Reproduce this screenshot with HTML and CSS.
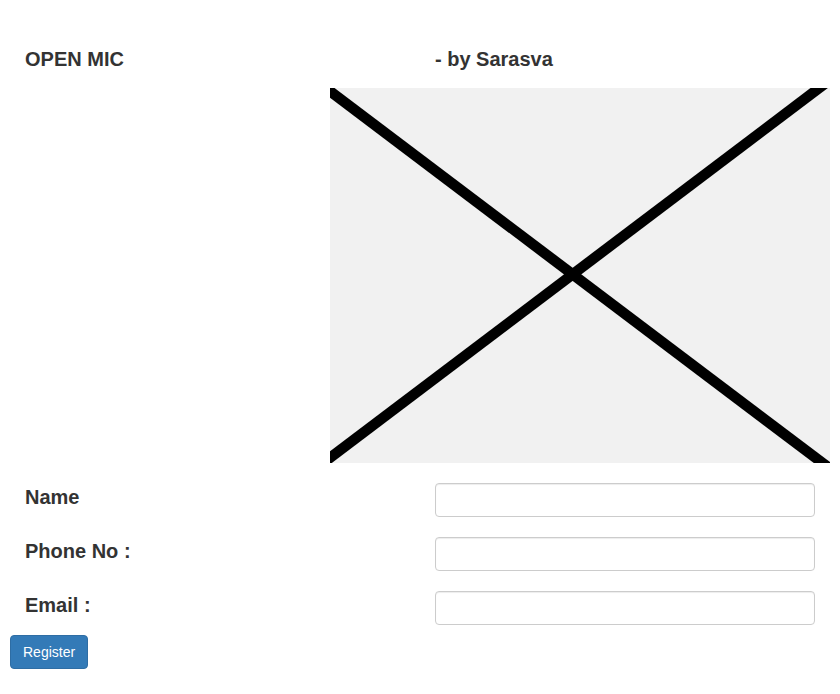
FILE: index.html
```html
<!DOCTYPE html>
<html lang="en">
<head>
<meta charset="utf-8">
<title>Open Mic</title>
<link rel="stylesheet" href="styles.css">
</head>
<body>
<div class="page">
  <div class="header">
    <h4 class="title">OPEN MIC</h4>
    <h4 class="title">- by Sarasva</h4>
  </div>
  <div class="banner">
    <svg class="banner-svg" width="500" height="375" viewBox="0 0 500 375">
      <rect x="0" y="0" width="500" height="375" fill="#f1f1f1"/>
      <line x1="-20" y1="-11.95" x2="520" y2="395.75" stroke="#000" stroke-width="10.5"/>
      <line x1="-20" y1="384.9" x2="520" y2="-23.3" stroke="#000" stroke-width="10.5"/>
    </svg>
  </div>
  <form class="form">
    <div class="row">
      <label class="label" for="name">Name</label>
      <div class="field"><input id="name" class="input" type="text"></div>
    </div>
    <div class="row">
      <label class="label" for="phone">Phone No :</label>
      <div class="field"><input id="phone" class="input" type="text"></div>
    </div>
    <div class="row">
      <label class="label" for="email">Email :</label>
      <div class="field"><input id="email" class="input" type="email"></div>
    </div>
    <button type="button" class="btn">Register</button>
  </form>
</div>
</body>
</html>
```
FILE: styles.css
```css
html, body {
  margin: 0;
  padding: 0;
  background: #fff;
}
body {
  font-family: "Liberation Sans", Arial, Helvetica, sans-serif;
  font-size: 14px;
  line-height: 1.42857;
  color: #333;
}
.page {
  padding: 0 10px;
}
.header {
  display: grid;
  grid-template-columns: 1fr 1fr;
  padding-top: 48px;
}
.title {
  margin: 0;
  padding: 0 15px;
  font-size: 20px;
  line-height: 22px;
  font-weight: bold;
}
.banner {
  width: 500px;
  height: 375px;
  margin: 18px 0 0 auto;
}
.banner-svg {
  display: block;
}
.form {
  margin: 0;
  padding-top: 20px;
  display: flex;
  flex-direction: column;
  align-items: flex-start;
}
.row {
  display: grid;
  grid-template-columns: 1fr 1fr;
  width: 100%;
  margin-bottom: 20px;
}
.row:last-of-type {
  margin-bottom: 10px;
}
.label {
  display: block;
  padding: 3px 15px 0;
  font-size: 20px;
  line-height: 22px;
  font-weight: bold;
}
.field {
  padding: 0 15px;
}
.input {
  display: block;
  box-sizing: border-box;
  width: 100%;
  height: 34px;
  margin: 0;
  padding: 6px 12px;
  font-family: inherit;
  font-size: 14px;
  color: #555;
  background: #fff;
  border: 1px solid #ccc;
  border-radius: 4px;
  box-shadow: inset 0 1px 1px rgba(0,0,0,.075);
}
.btn {
  box-sizing: border-box;
  height: 34px;
  padding: 6px 12px;
  font-family: inherit;
  font-size: 14px;
  line-height: 20px;
  color: #fff;
  background: #337ab7;
  border: 1px solid #2e6da4;
  border-radius: 4px;
  cursor: pointer;
}
```
